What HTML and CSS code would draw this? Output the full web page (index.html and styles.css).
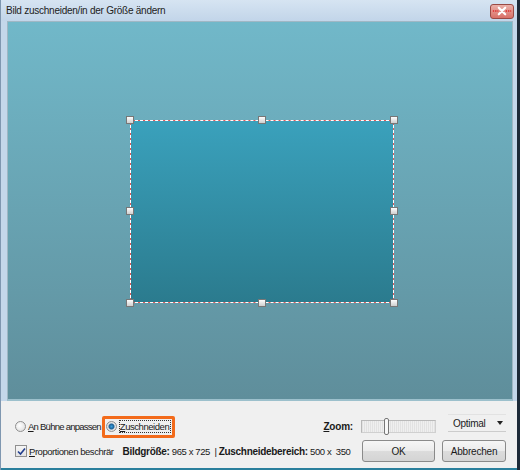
FILE: index.html
```html
<!DOCTYPE html>
<html>
<head>
<meta charset="utf-8">
<link rel="stylesheet" href="styles.css">
</head>
<body>
<div class="window">
  <div class="titlebar">
    <span class="title">Bild zuschneiden/in der Größe ändern</span>
    <span class="close">
      <svg width="24" height="14" viewBox="0 0 24 14">
        <path d="M2 7 H8 M16 7 H22" stroke="#e02828" stroke-width="1.6" stroke-dasharray="1.5 1"/>
        <path d="M8.5 3.5 L15.5 10.5 M15.5 3.5 L8.5 10.5" stroke="#fff" stroke-width="2.4" stroke-linecap="round"/>
      </svg>
    </span>
  </div>
  <div class="stage">
    <div class="crop">
      <span class="h tl"></span><span class="h tc"></span><span class="h tr"></span>
      <span class="h ml"></span><span class="h mr"></span>
      <span class="h bl"></span><span class="h bc"></span><span class="h br"></span>
    </div>
  </div>
  <div class="panel">
    <div class="row">
      <label class="opt"><span class="radio"></span><span class="lbl narrow"><u>A</u>n Bühne anpassen</span></label>
      <label class="opt sel"><span class="radio on"></span><span class="lbl focus"><u>Z</u>uschneiden</span></label>
      <span class="zoomlbl"><u>Z</u>oom:</span>
      <span class="slider"><span class="thumb"></span></span>
      <span class="select"><span class="lbl">Optimal</span><span class="arrow"></span></span>
    </div>
    <div class="row">
      <label class="opt"><span class="check">
        <svg width="9" height="9" viewBox="0 0 9 9"><path d="M1 4.5 L3.5 7 L8 1.5" stroke="#233f8e" stroke-width="1.6" fill="none"/></svg>
      </span><span class="lbl"><u>P</u>roportionen beschrär</span></label>
      <span class="info"><b>Bildgröße:</b> 965 x 725 &nbsp;| <b>Zuschneidebereich:</b> 500 x &nbsp;350</span>
      <span class="btn ok"><span class="lbl">OK</span></span>
      <span class="btn cancel"><span class="lbl">Abbrechen</span></span>
    </div>
  </div>
</div>
</body>
</html>
```

FILE: styles.css
```css
* { box-sizing: border-box; }
html, body { margin: 0; padding: 0; }
body { width: 520px; height: 470px; overflow: hidden; font-family: "Liberation Sans", Arial, sans-serif; font-size: 9.5px; color: #1a1a1a; }
.window {
  width: 520px; height: 470px;
  background: #c4d7ea;
  border-right: 3px solid #1d2a38;
  border-left: 1px solid #7f97b0;
  display: flex; flex-direction: column;
}
.titlebar {
  height: 21px;
  background: linear-gradient(#d6e4f2, #c2d5e9);
  display: flex; align-items: center; justify-content: space-between;
  padding: 0 3px 0 5px;
}
.title { font-size: 10px; color: #222; letter-spacing: -0.25px; }
.close {
  width: 24px; height: 15px; border-radius: 3px;
  background: linear-gradient(#eab0a9, #d97067);
  border: 1px solid #9a4a44;
  display: flex; align-items: center; justify-content: center;
  margin-top: 1px; overflow: hidden;
}
.close svg { display: block; }
.stage {
  margin: 0 4px 0 6px;
  height: 380px;
  border: 1px solid #9fb7c4;
  border-bottom: 2px solid #9cc0cc;
  background: linear-gradient(#71b8c9, #5f8e9b);
  position: relative;
}
.crop {
  position: absolute; left: 122px; top: 98px; width: 264px; height: 183px;
  border: 1px dashed #fff;
  background: linear-gradient(#3aa1bc, #2b7b8e) padding-box, linear-gradient(#e05a5a, #e05a5a) border-box;
}
.h {
  position: absolute; width: 8px; height: 8px;
  background: linear-gradient(#fdfdfd, #cfcfcf);
  border: 1px solid #777;
}
.tl { left: -5px; top: -5px; } .tc { left: 127px; top: -5px; } .tr { right: -5px; top: -5px; }
.ml { left: -5px; top: 86px; } .mr { right: -5px; top: 86px; }
.bl { left: -5px; bottom: -5px; } .bc { left: 127px; bottom: -5px; } .br { right: -5px; bottom: -5px; }
.panel {
  flex: 1;
  background: #f0f0f0;
  padding: 14px 11px 0 14px;
  display: flex; flex-direction: column; gap: 3px;
  border-bottom: 2px solid #2a7f9c;
}
.row { display: flex; align-items: center; height: 22px; white-space: nowrap; }
.lbl { letter-spacing: -0.45px; font-size: 9.5px; }
.narrow { letter-spacing: -0.75px; }
.opt { display: flex; align-items: center; gap: 2px; flex-shrink: 0; }
.radio {
  width: 11px; height: 11px; border-radius: 50%;
  border: 1px solid #8f8f8f;
  background: radial-gradient(circle at 40% 40%, #fff, #d8d8d8);
}
.radio.on { background: radial-gradient(circle, #3aa0dd 0, #1b5f95 2.5px, #e6e6e6 3.5px, #ddd 5px); }
.sel {
  margin-left: 1px;
  border: 3px solid #f36b1b; border-radius: 2px;
  padding: 1px 1px 1px 1px; height: 22px; margin-top: 1px;
}
.focus { border: 1px dotted #333; padding: 0 1px 0 0; line-height: 11px; }
.zoomlbl { margin-left: auto; font-weight: bold; font-size: 10px; letter-spacing: -0.2px; margin-right: 8px; }
.slider {
  width: 75px; height: 13px; position: relative; flex-shrink: 0;
  border: 1px solid #d0d0d0; border-left-color: #b8b8b8; border-top-color: #b8b8b8;
  background: repeating-linear-gradient(90deg, #e2e2e2 0 1px, #efefef 1px 2px);
  margin-right: 12px;
}
.thumb { position: absolute; left: 22px; top: -3px; width: 5px; height: 17px; border: 1px solid #777; border-radius: 2px; background: #f8f8f8; }
.select {
  width: 58px; height: 18px; padding-left: 5px; margin-top: -6px; flex-shrink: 0;
  border-bottom: 1px solid #ccc; border-top: 1px solid #e2e2e2;
  display: flex; align-items: center; justify-content: space-between;
}
.select .lbl { font-size: 10px; letter-spacing: -0.3px; }
.arrow { width: 0; height: 0; border-left: 3.5px solid transparent; border-right: 3.5px solid transparent; border-top: 4px solid #222; margin-right: 3px; }
.check {
  width: 12px; height: 12px; border: 1px solid #8f8f8f;
  background: linear-gradient(#f5f5f5, #e4e4e4);
  display: flex; align-items: center; justify-content: center;
}
.check svg { display: block; }
.info { margin-left: 9px; letter-spacing: -0.4px; flex-shrink: 0; }
.info b { font-weight: bold; font-size: 10px; letter-spacing: -0.3px; }
.btn {
  height: 22px; display: flex; align-items: center; justify-content: center; flex-shrink: 0;
  border: 1px solid #8a8a8a; border-radius: 3px;
  background: linear-gradient(#f6f6f6 0, #ebebeb 50%, #dcdcdc 50%, #d4d4d4 100%);
}
.btn .lbl { font-size: 10px; letter-spacing: -0.2px; }
.ok { width: 73px; margin-left: auto; }
.cancel { width: 64px; margin-left: 7px; }
u { text-decoration: underline; }
```
